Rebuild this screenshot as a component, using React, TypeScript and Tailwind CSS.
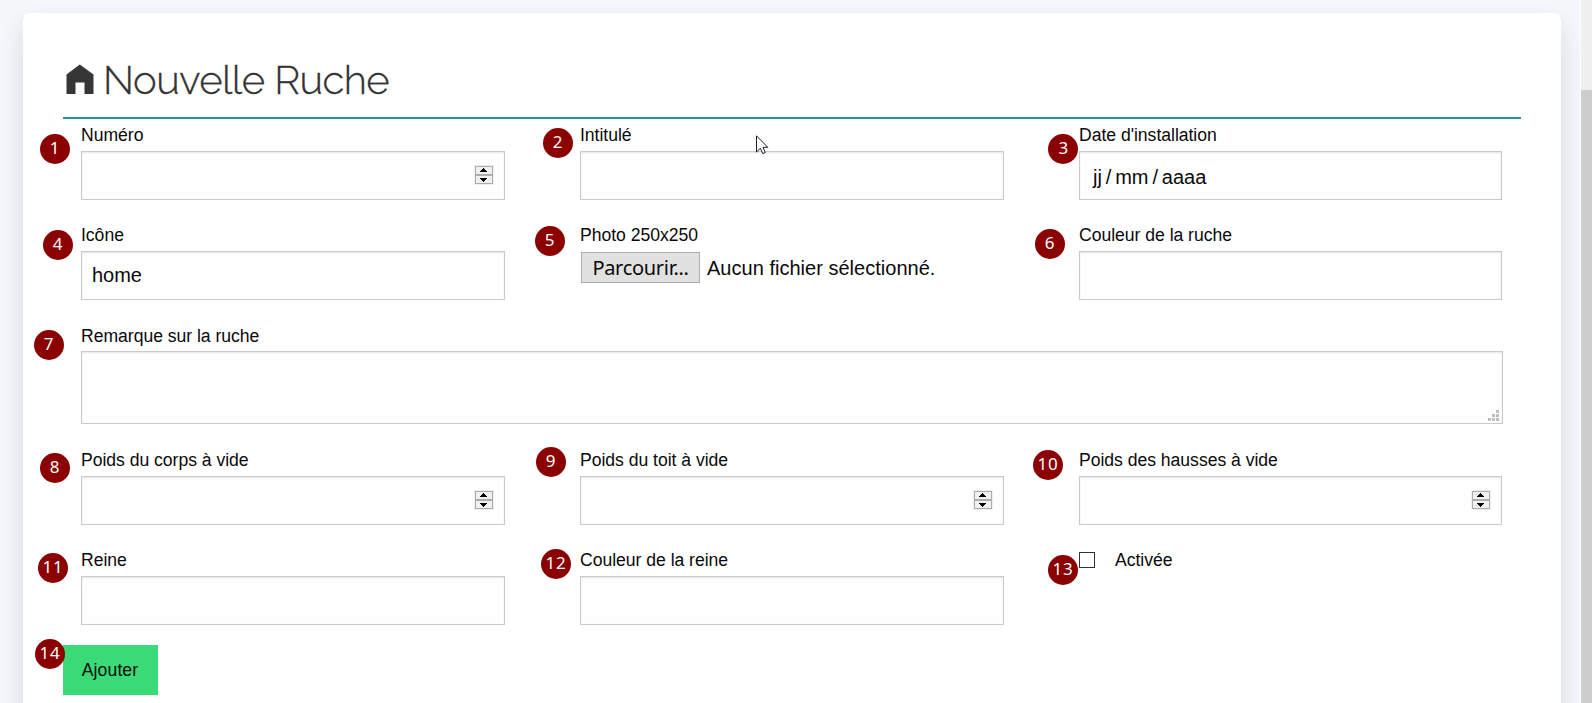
import type { ReactNode } from "react";

function Badge({ n, x, y }: { n: number; x: number; y: number }) {
  return (
    <span
      className="absolute flex size-[30px] items-center justify-center rounded-full bg-[#8b0000] pb-[2px] pl-px font-['Noto_Sans',sans-serif] text-[17px] leading-none tracking-[0.8px] text-white"
      style={{ left: x - 15, top: y - 15 }}
    >
      {n}
    </span>
  );
}

const badges: [number, number][] = [
  [54.5, 148.5], [557.5, 142.5], [1063.3, 148.5], [57.5, 244.5], [549.5, 240.5],
  [1049.5, 243.5], [48.5, 344.5], [54.5, 467.5], [550.5, 461.5], [1047.5, 464.5],
  [52.5, 567.5], [555.5, 563.5], [1062.5, 569.5], [49.5, 653.5],
];

function Spinner() {
  return (
    <svg className="mb-[2px]" width="20" height="20" viewBox="0 0 20 20" shapeRendering="crispEdges">
      <rect width="20" height="20" fill="#efefef" />
      <rect x="1.5" y="1.5" width="17" height="8" fill="#f0f0f0" stroke="#acacac" />
      <rect x="1.5" y="10.5" width="17" height="8" fill="#f0f0f0" stroke="#acacac" />
      <path d="M9 3h1v1h1v1h1v1h1v1H6V6h1V5h1V4h1zM6 13h7v1h-1v1h-1v1h-1v1H9v-1H8v-1H7v-1H6z" fill="#000" />
    </svg>
  );
}

function Field({ label, children, spinner }: { label: string; children?: ReactNode; spinner?: boolean }) {
  return (
    <div>
      <div className="mb-[6px] h-5 leading-5">{label}</div>
      <div className="flex h-[49px] items-center border border-[#cacaca] bg-[#fefefe] px-[10px] text-[20px] shadow-[inset_0_1px_2px_rgba(10,10,10,0.1)]">
        {children}
        {spinner && <span className="ml-auto"><Spinner /></span>}
      </div>
    </div>
  );
}

export default function App() {
  return (
    <div className="relative flex h-[703px] w-[1592px] overflow-hidden bg-[#f5f7fb] font-['Liberation_Sans',Arial,sans-serif] text-[17.6px] tracking-[-0.03px] text-[#0a0a0a]">
      <main className="ml-[23px] mt-[13px] h-[760px] w-[1538px] shrink-0 rounded-lg bg-white px-10 shadow-[0_12px_24px_rgba(60,60,90,0.16)]">
        <h1 className="flex h-[106px] items-start border-b-2 border-[#1c97a3] pt-[42px] font-['Raleway','Lato',sans-serif] text-[40px] font-light leading-[50px] tracking-[-0.5px] text-[#333] [-webkit-text-stroke:0.3px_#333]">
          <svg className="ml-[3px] mr-[9px] mt-[9px]" width="28" height="31" viewBox="0 0 28 31">
            <path d="M13.8 .6 L27.5 10.5 V30 H18.5 V18.5 H9.5 V30 H.5 V10.5 Z" fill="#363636" />
          </svg>
          <span>Nouvelle Ruche</span>
        </h1>

        <form className="pt-[6px]">
          <div className="grid grid-cols-[424px_424px_423px] gap-x-[75px] gap-y-[25px] pl-[18px]">
            <Field label="Numéro" spinner />
            <Field label="Intitulé" />
            <Field label="Date d'installation"><span className="pl-[3px] pt-[2px] [word-spacing:-1.6px]">jj / mm / aaaa</span></Field>
            <Field label="Icône"><span className="pb-[2px]">home</span></Field>
            <div>
              <div className="mb-[7px] h-5 leading-5">Photo 250x250</div>
              <div className="flex items-center pl-px text-[20px]">
                <button type="button" className="h-[31px] w-[119px] border border-[#adadad] bg-[#e1e1e1] font-['Noto_Sans',sans-serif] leading-[27px] tracking-[-0.3px]">Parcourir...</button>
                <span className="ml-[7px] tracking-[0.02px]">Aucun fichier sélectionné.</span>
              </div>
            </div>
            <Field label="Couleur de la ruche" />
          </div>

          <div className="ml-[18px] mt-[26px] w-[1422px]">
            <div className="mb-[5px] h-5 leading-5">Remarque sur la ruche</div>
            <div className="flex h-[73px] items-end justify-end border border-[#cacaca] bg-[#fefefe] p-[2px] pb-px shadow-[inset_0_1px_2px_rgba(10,10,10,0.1)]">
              <svg width="12" height="12" viewBox="0 0 12 12" fill="#bfbfbf" shapeRendering="crispEdges">
                <path d="M8 0h3v3H8zM8 4h3v3H8zM8 8h3v3H8zM4 4h3v3H4zM4 8h3v3H4zM0 8h3v3H0z" />
              </svg>
            </div>
          </div>

          <div className="mt-[26px] grid grid-cols-[424px_424px_423px] gap-x-[75px] gap-y-[25px] pl-[18px]">
            <Field label="Poids du corps à vide" spinner />
            <Field label="Poids du toit à vide" spinner />
            <Field label="Poids des hausses à vide" spinner />
            <Field label="Reine" />
            <Field label="Couleur de la reine" />
            <div className="flex h-5 leading-5">
              <span className="mt-[2px] size-4 border border-[#333] bg-white" />
              <span className="ml-5">Activée</span>
            </div>
          </div>

          <button type="button" className="mt-5 block h-[50px] w-[95px] bg-[#3adb76] pr-px tracking-[0.1px]">Ajouter</button>
        </form>
      </main>

      <div className="ml-auto h-full w-3 shrink-0 border-l border-white bg-[#f0f0f0] pt-[90px]">
        <div className="h-full bg-[#cdcdcd]" />
      </div>

      {badges.map(([x, y], i) => (
        <Badge key={i} n={i + 1} x={x} y={y} />
      ))}

      <svg className="absolute left-[756px] top-[135px]" width="13" height="20" viewBox="0 0 13 20">
        <path d="M.5 .8V17L4.4 13.3L6.8 18.6L9.3 17.6L7 12.3H11.8Z" fill="#fff" stroke="#1a1a2a" />
      </svg>
    </div>
  );
}
